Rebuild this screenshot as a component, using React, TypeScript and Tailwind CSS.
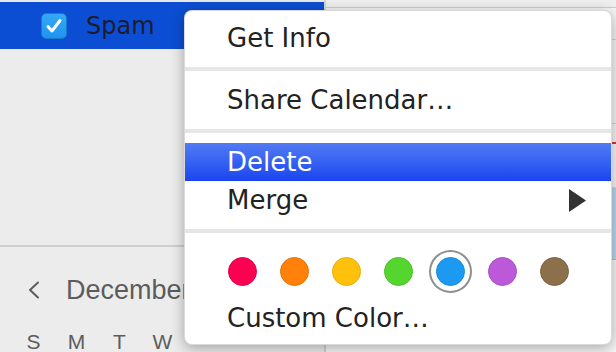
const colors = [
  { c: "bg-[#fc0052]", b: "border-[#e0004a]" },
  { c: "bg-[#ff800b]", b: "border-[#e57208]" },
  { c: "bg-[#ffc10c]", b: "border-[#e6ad0a]" },
  { c: "bg-[#55d62f]", b: "border-[#48bf27]" },
  { c: "bg-[#1c9af2]", b: "border-[#178ad9]", selected: true },
  { c: "bg-[#bc59d9]", b: "border-[#a94fc4]" },
  { c: "bg-[#8c6f4b]", b: "border-[#7c6242]" },
];

function Separator() {
  return (
    <div className="h-6 flex items-center">
      <div className="h-1 w-full bg-[#e6e6e6]" />
    </div>
  );
}

function Item({ label, active, submenu }: { label: string; active?: boolean; submenu?: boolean }) {
  return (
    <div
      className={`h-[38px] flex items-center pl-[42px] pr-[25px] ${
        active ? "bg-gradient-to-b from-[#527af3] to-[#1a43ef] text-white" : "text-[#222]"
      }`}
    >
      <span className="flex-1">{label}</span>
      {submenu && (
        <svg width="17" height="23" viewBox="0 0 17 23">
          <path d="M0 0 L17 11.5 L0 23 Z" fill="#333" />
        </svg>
      )}
    </div>
  );
}

export default function App() {
  return (
    <div className="relative w-[616px] h-[352px] overflow-hidden bg-[#f6f6f6] flex">
      {/* Sidebar */}
      <div className="w-[326px] h-full flex flex-col bg-[#ececec] border-r-2 border-[#d4d4d4] font-['Liberation_Sans',sans-serif]">
        <div className="h-[2px] bg-[#e9e9e9]" />
        <div className="h-[47px] bg-[#0c4ed3] flex items-center pl-[41px]">
          <div className="w-[26px] h-[26px] rounded-[5px] bg-gradient-to-b from-[#35a9f7] to-[#1f93ef] border border-[#1979cc] flex items-center justify-center">
            <svg width="18" height="16" viewBox="0 0 18 16">
              <path d="M3 8.5 L7 13 L15 2.5" fill="none" stroke="white" strokeWidth="3" strokeLinecap="round" strokeLinejoin="round" />
            </svg>
          </div>
          <span className="ml-[19px] text-[24px] text-[#1b1d2e] font-['DejaVu_Sans',sans-serif]">Spam</span>
        </div>
        <div className="h-[196px]" />
        <div className="h-[2px] bg-[#cfcfcf]" />
        <div className="flex items-center h-[42px] mt-[22px] pl-[28px] text-[#5c5c5c]">
          <svg width="12" height="18" viewBox="0 0 12 18">
            <path d="M10 1.5 L2 9 L10 16.5" fill="none" stroke="#5c5c5c" strokeWidth="2" strokeLinecap="round" strokeLinejoin="round" />
          </svg>
          <span className="ml-[26px] text-[27px]">December</span>
        </div>
        <div className="grid grid-cols-[repeat(4,43px)] pl-[12px] mt-[20px] text-[21px] leading-none text-[#5c5c5c]">
          {["S", "M", "T", "W"].map((d) => (
            <span key={d} className="text-center">{d}</span>
          ))}
        </div>
      </div>

      {/* Calendar pane */}
      <div className="flex-1 flex flex-col">
        <div className="h-[8px] bg-[#efefef] border-b border-[#cfcfcf]" />
        <div className="h-[32px] border-b border-[#d6d6d6]" />
        <div className="h-[84px] border-b border-[#d6d6d6]" />
        <div className="h-[20px] border-b-2 border-[#e0312b]" />
        <div className="h-[44px] border-b border-[#d6d6d6]" />
        <div className="h-[72px] bg-[#b9d7ec] border-b border-[#9fc3de]" />
        <div className="flex-1" />
      </div>

      {/* Context menu */}
      <div className="absolute left-[184px] top-[10px] w-[428px] h-[335px] bg-white rounded-[8px] border border-black/15 shadow-[0_3px_14px_rgba(0,0,0,0.32)] pt-[8px] text-[26px] font-['DejaVu_Sans',sans-serif] overflow-hidden">
        <Item label="Get Info" />
        <Separator />
        <Item label="Share Calendar…" />
        <Separator />
        <Item label="Delete" active />
        <Item label="Merge" submenu />
        <Separator />
        <div className="h-[56px] flex items-center pl-[43px] gap-[23px]">
          {colors.map((k, i) => (
            <div
              key={i}
              className={`w-[29px] h-[29px] rounded-full border ${k.c} ${k.b} ${
                k.selected ? "ring-2 ring-[#8e8e8e] ring-offset-[5px] ring-offset-white" : ""
              }`}
            />
          ))}
        </div>
        <Item label="Custom Color…" />
      </div>
    </div>
  );
}
